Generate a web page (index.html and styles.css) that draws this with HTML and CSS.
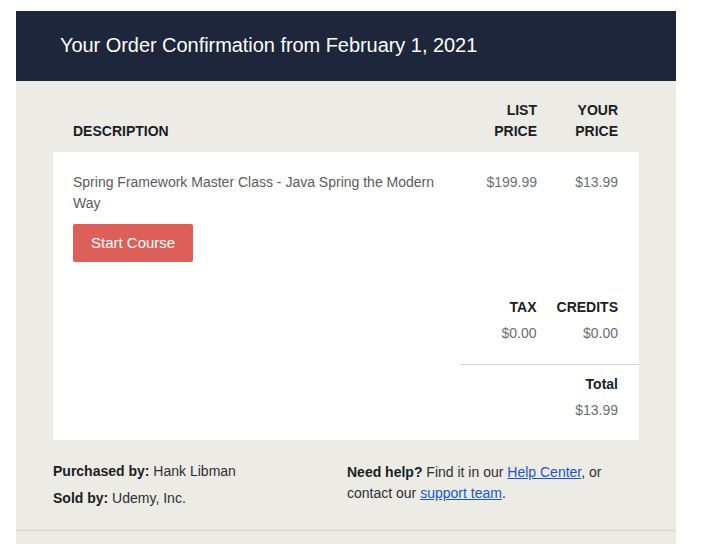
FILE: index.html
```html
<!DOCTYPE html>
<html>
<head>
<meta charset="utf-8">
<link rel="stylesheet" href="styles.css">
</head>
<body>
<div class="email">
  <div class="header">
    <h1 class="title">Your Order Confirmation from February 1, 2021</h1>
  </div>
  <div class="main">
    <div class="cols thead">
      <div class="c-desc">DESCRIPTION</div>
      <div class="c-num">LIST<br>PRICE</div>
      <div class="c-num">YOUR<br>PRICE</div>
    </div>
    <div class="card">
      <div class="cols item">
        <div class="c-desc">
          <div class="desc-text">Spring Framework Master Class - Java Spring the Modern Way</div>
          <a class="btn">Start Course</a>
        </div>
        <div class="c-num val">$199.99</div>
        <div class="c-num val">$13.99</div>
      </div>
      <div class="summary">
        <div class="sum-row">
          <div class="sum-cell"><div class="lbl">TAX</div><div class="val">$0.00</div></div>
          <div class="sum-cell"><div class="lbl">CREDITS</div><div class="val">$0.00</div></div>
        </div>
        <div class="total">
          <div class="lbl total-lbl">Total</div>
          <div class="val">$13.99</div>
        </div>
      </div>
    </div>
    <div class="footer">
      <div class="f-left">
        <p class="f-line"><b>Purchased by:</b> Hank Libman</p>
        <p class="f-line"><b>Sold by:</b> Udemy, Inc.</p>
      </div>
      <div class="f-right">
        <p class="f-help"><b>Need help?</b> Find it in our <a href="#" class="link">Help Center</a>, or contact our <a href="#" class="link">support team</a>.</p>
      </div>
    </div>
  </div>
  <div class="bottom"></div>
</div>
</body>
</html>
```

FILE: styles.css
```css
* { box-sizing: border-box; }
body {
  margin: 0;
  background: #ffffff;
  font-family: "Liberation Sans", Arial, Helvetica, sans-serif;
  color: #1c1d1f;
}
.email {
  width: 660px;
  margin: 11px 0 0 16px;
  background: #ecebe6;
}
.header {
  background: #1e263b;
  height: 70px;
  padding: 0 44px;
  display: flex;
  align-items: center;
}
.title {
  margin: 0;
  color: #ffffff;
  font-size: 20px;
  font-weight: normal;
  line-height: 24px;
  padding-bottom: 3px;
  letter-spacing: -0.05px;
}
.main {
  padding: 0 37px;
}
.cols {
  display: grid;
  grid-template-columns: 1fr 80px 81px;
  padding: 0 21px 0 20px;
}
.c-num { text-align: right; }
.thead {
  padding-top: 19px;
  padding-bottom: 10px;
  font-size: 14px;
  font-weight: bold;
  line-height: 21px;
  align-items: end;
  color: #1c1d1f;
}
.card {
  background: #ffffff;
  padding-bottom: 19px;
}
.item {
  padding-top: 20px;
  font-size: 14px;
  line-height: 21px;
}
.desc-text {
  color: #5b5b5b;
  padding-right: 20px;
}
.val { color: #6a6f73; font-size: 14px; line-height: 21px; }
.btn {
  display: inline-block;
  margin-top: 10px;
  background: #dd5f5a;
  color: #ffffff;
  font-size: 15px;
  line-height: 38px;
  height: 38px;
  padding: 0 18px;
  border-radius: 2px;
}
.summary {
  margin: 35px 0 0 auto;
  width: 179px;
}
.sum-row {
  display: flex;
  justify-content: flex-end;
  gap: 20px;
  padding-right: 21px;
}
.sum-cell { text-align: right; }
.lbl {
  font-size: 14px;
  font-weight: bold;
  line-height: 21px;
  margin-bottom: 5px;
  color: #1c1d1f;
}
.total {
  border-top: 1px solid #d1d1d1;
  margin-top: 20px;
  padding-top: 9px;
  padding-right: 21px;
  text-align: right;
}
.footer {
  display: flex;
  padding: 21px 0 21px;
  font-size: 14px;
  line-height: 21px;
  color: #2d2f31;
}
.f-left { width: 294px; }
.f-line { margin: 0 0 6px; }
.f-line:last-child { margin-bottom: 0; }
.f-right { width: 270px; padding-top: 1px; }
.f-help { margin: 0; }
.footer b { color: #1c1d1f; }
.link { color: #1c55d0; text-decoration: underline; }
.bottom {
  border-top: 1px solid #d5d4cf;
  height: 20px;
}
```
